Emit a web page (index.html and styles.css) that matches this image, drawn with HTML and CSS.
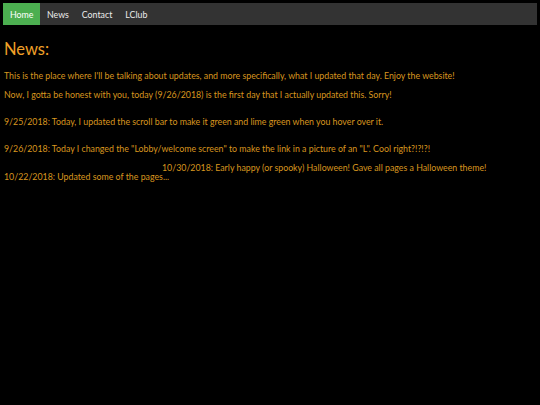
FILE: index.html
```html
<!DOCTYPE html>
<html>
<head>
<meta charset="utf-8">
<link rel="stylesheet" href="styles.css">
</head>
<body>
<nav class="topnav">
  <a class="active" href="#">Home</a>
  <a href="#">News</a>
  <a href="#">Contact</a>
  <a href="#">LClub</a>
</nav>
<main class="content">
  <h1 class="title">News:</h1>
  <p class="line">This is the place where I'll be talking about updates, and more specifically, what I updated that day. Enjoy the website!</p>
  <p class="line">Now, I gotta be honest with you, today (9/26/2018) is the first day that I actually updated this. Sorry!</p>
  <p class="line gap">9/25/2018: Today, I updated the scroll bar to make it green and lime green when you hover over it.</p>
  <p class="line gap">9/26/2018: Today I changed the "Lobby/welcome screen" to make the link in a picture of an "L". Cool right?!?!?!</p>
  <p class="line shifted">10/30/2018: Early happy (or spooky) Halloween! Gave all pages a Halloween theme!</p>
  <p class="line tight">10/22/2018: Updated some of the pages...</p>
</main>
</body>
</html>
```
FILE: styles.css
```css
html, body {
  margin: 0;
  background: #000;
}
body {
  padding: 3px;
  font-family: Lato, "Noto Sans", sans-serif;
  color: #d8961f;
}
.topnav {
  display: flex;
  background: #333;
  height: 22px;
}
.topnav a {
  display: flex;
  align-items: center;
  padding: 0 6.5px;
  color: #ececec;
  text-decoration: none;
  font-size: 8.8px;
}
.topnav a.active {
  background: #4caf50;
  color: #fff;
  padding: 0 7px;
}
.content {
  padding: 0 1px;
}
.title {
  margin: 12px 0 0;
  font-size: 16.5px;
  font-weight: normal;
  color: #f0a028;
  line-height: 24px;
}
.line {
  margin: 0;
  font-size: 8.8px;
  line-height: 12px;
}
.title + .line { margin-top: 9px; }
.line + .line { margin-top: 7px; }
.line.gap { margin-top: 15px; }
.line.shifted { margin-top: 7px; padding-left: 158px; }
.line.tight { margin-top: -3px; }
```
